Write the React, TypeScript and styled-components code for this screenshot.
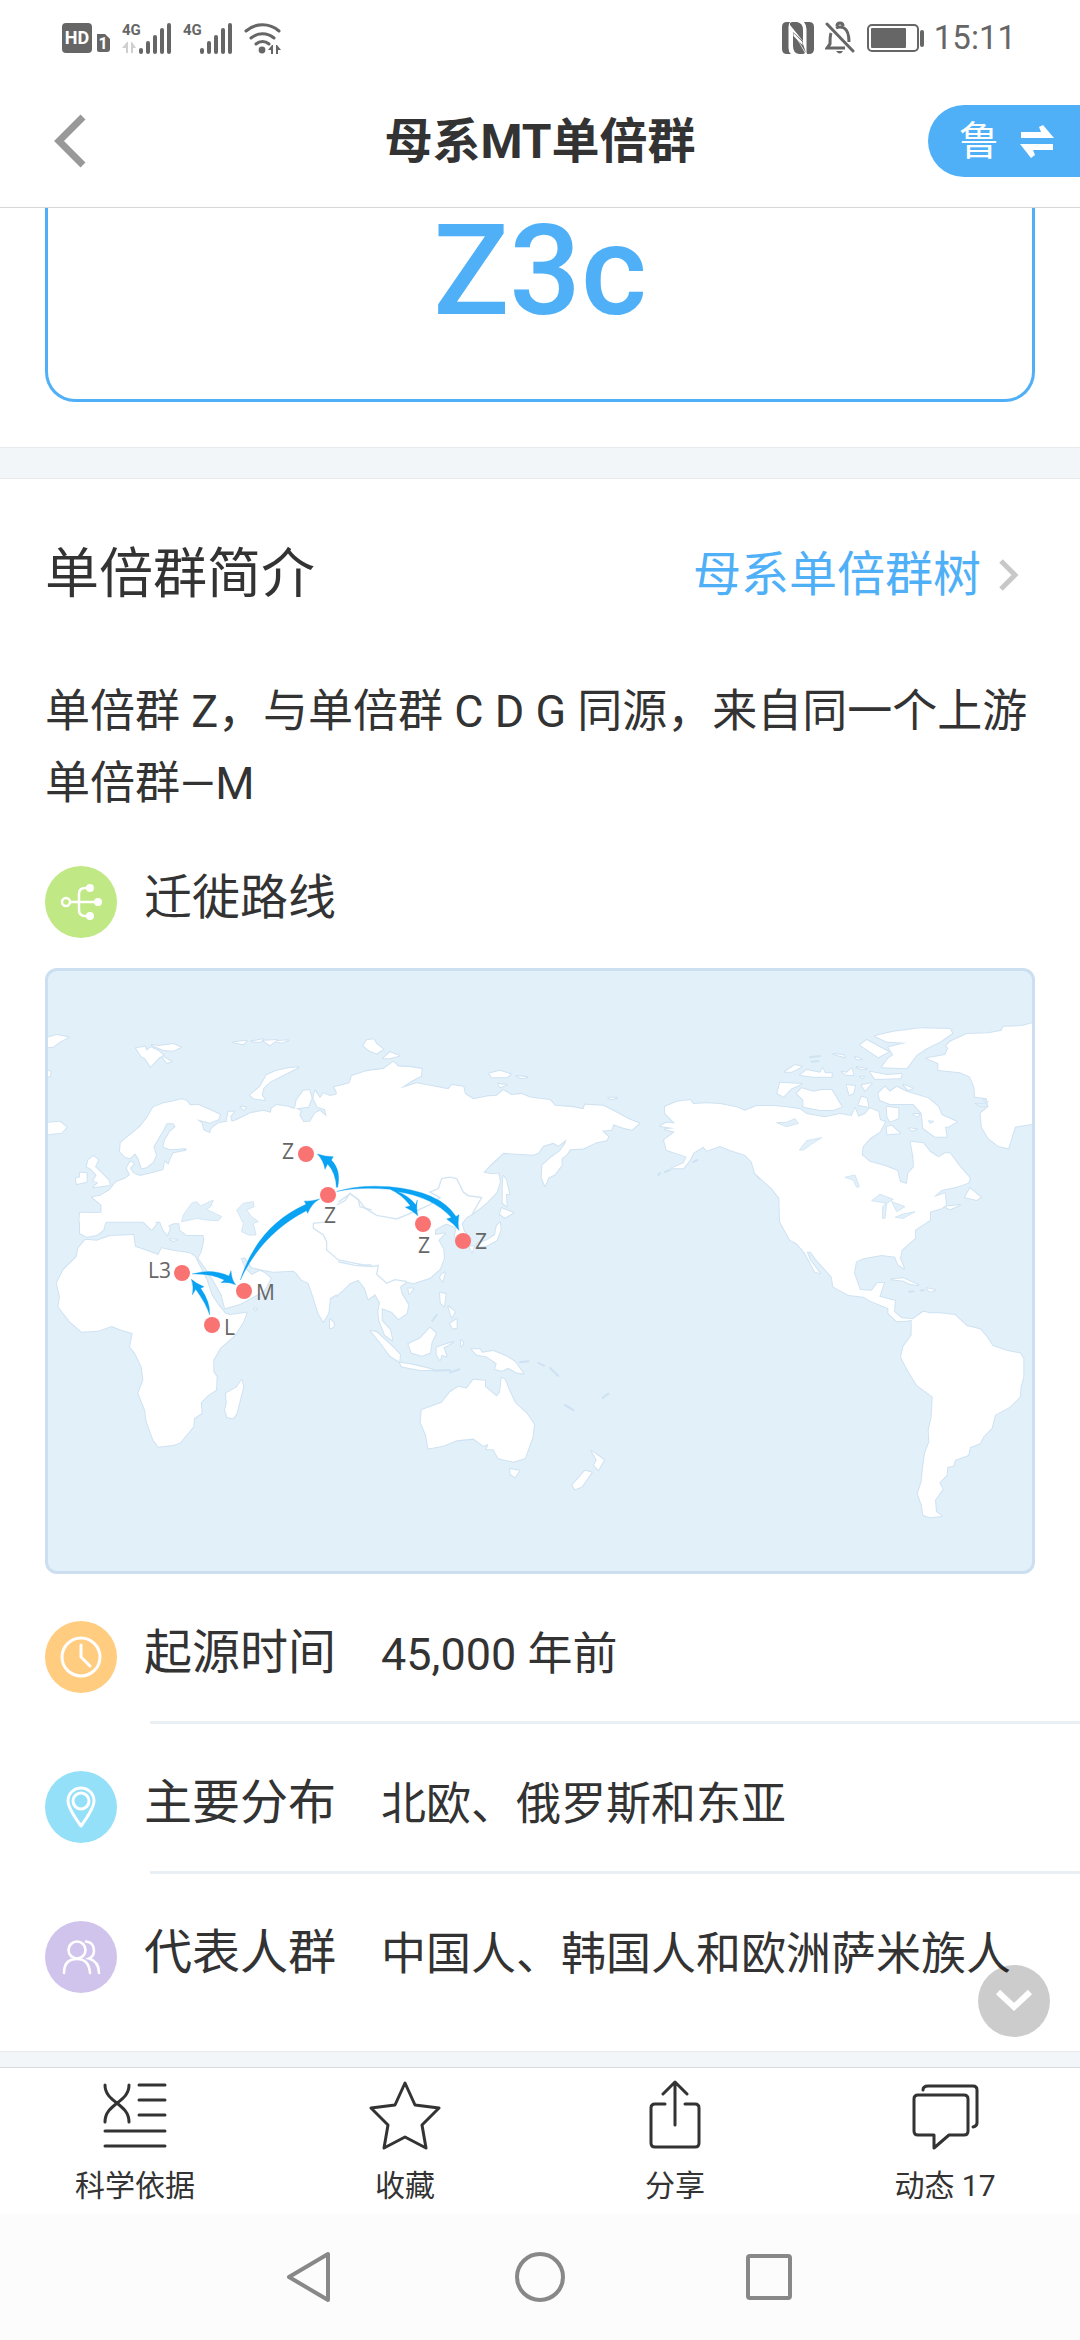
import React from 'react';
import styled, { createGlobalStyle } from 'styled-components';

const blue = '#4fb0f8';
const ink = '#333333';
const statusInk = '#666666';

const GlobalStyle = createGlobalStyle`
  * { box-sizing: border-box; }
  body {
    margin: 0;
    background: #fff;
    color: ${ink};
    font-family: Roboto, "Noto Sans CJK SC", sans-serif;
  }
  h1, h2, h3, p, dl, dt, dd { margin: 0; font-weight: 400; }
  button { padding: 0; border: 0; background: none; color: inherit; font: inherit; cursor: pointer; }
  a { color: inherit; text-decoration: none; }
  svg { display: block; flex: none; }
`;

const Page = styled.div`
  display: flex;
  flex-direction: column;
  min-height: 100vh;
`;

/* ---------- status bar ---------- */

const StatusBar = styled.div`
  display: flex;
  align-items: center;
  justify-content: space-between;
  height: 74px;
  padding: 2px 64px 0 61px;
  color: ${statusInk};
`;

const StatusGroup = styled.div<{ $gap: number }>`
  display: flex;
  align-items: center;
  gap: ${(p) => p.$gap}px;
`;

const Clock = styled.time`
  font-size: 33px;
  line-height: 40px;
`;

/* ---------- header ---------- */

const Header = styled.header`
  display: grid;
  grid-template-columns: 1fr auto 1fr;
  align-items: center;
  height: 134px;
  border-bottom: 1px solid #d8d8d8;
`;

const BackButton = styled.button`
  justify-self: start;
  padding: 20px 40px 20px 53px;
`;

const Title = styled.h1`
  padding-top: 2px;
  font-size: 48px;
  line-height: 64px;
  font-weight: 700;
`;

const SwitchButton = styled.button`
  display: flex;
  align-items: center;
  justify-self: end;
  gap: 20px;
  height: 72px;
  padding: 2px 25px 0 31px;
  border-radius: 36px 0 0 36px;
  background: ${blue};
  color: #fff;
  font-size: 40px;
  line-height: 48px;
`;

/* ---------- content ---------- */

const Main = styled.main`
  position: relative;
  flex: 1;
`;

const ResultCard = styled.section`
  margin: 0 45px 45px;
  padding: 3px 0 68px;
  border: 3px solid ${blue};
  border-top: 0;
  border-radius: 0 0 30px 30px;
  color: ${blue};
  font-size: 126px;
  line-height: 120px;
  font-weight: 500;
  text-align: center;
`;

const Band = styled.div<{ $height: number; $closed?: boolean }>`
  height: ${(p) => p.$height}px;
  border-top: 1px solid #e6eaec;
  border-bottom: ${(p) => (p.$closed ? '1px solid #e6eaec' : '0')};
  background: #f2f6f9;
`;

const Intro = styled.section`
  padding: 56px 45px 0;
`;

const IntroHead = styled.div`
  display: flex;
  align-items: center;
  justify-content: space-between;
  padding-right: 15px;
`;

const SectionTitle = styled.h2`
  font-size: 54px;
  line-height: 80px;
`;

const TreeLink = styled.a`
  display: flex;
  align-items: center;
  gap: 17px;
  color: ${blue};
  font-size: 48px;
  line-height: 64px;
`;

const Paragraph = styled.p`
  margin: 61px 0 46px;
  font-size: 45px;
  line-height: 72px;
`;

const Badge = styled.span<{ $color: string }>`
  display: grid;
  place-items: center;
  flex: none;
  width: 72px;
  height: 72px;
  border-radius: 50%;
  background: ${(p) => p.$color};
`;

const RouteHead = styled.div`
  display: flex;
  gap: 27px;
`;

const RouteTitle = styled.h3`
  font-size: 48px;
  line-height: 64px;
`;

const MapFrame = styled.figure`
  margin: 30px 0 0;
  border: 3px solid #cbdff0;
  border-radius: 12px;
  background: #e2f0fa;
  overflow: hidden;

  svg { width: 100%; height: auto; }
`;

const MapLabel = styled.text`
  font-family: "Open Sans", "Noto Sans", sans-serif;
  font-size: 21px;
  fill: #666;
`;

const Facts = styled.dl`
  padding-bottom: 30px;
`;

const Fact = styled.div`
  display: flex;
  gap: 27px;
  padding: 47px 45px 28px;
`;

const FactName = styled.dt`
  flex: none;
  margin-right: 18px;
  font-size: 48px;
  line-height: 64px;
`;

const FactValue = styled.dd`
  font-size: 45px;
  line-height: 68px;
`;

const Divider = styled.div`
  height: 3px;
  margin-left: 150px;
  background: #e9eff3;
`;

const ScrollButton = styled.button`
  position: absolute;
  right: 30px;
  bottom: 30px;
  display: grid;
  place-items: center;
  width: 72px;
  height: 72px;
  border-radius: 50%;
  background: rgba(0, 0, 0, 0.2);
`;

/* ---------- bottom bars ---------- */

const TabBar = styled.nav`
  display: grid;
  grid-template-columns: repeat(4, 1fr);
  height: 147px;
  border-top: 1px solid #d9dcde;
`;

const Tab = styled.button`
  display: flex;
  flex-direction: column;
  align-items: center;
  gap: 14px;
  padding-top: 12px;
  font-size: 30px;
  line-height: 40px;
`;

const SystemBar = styled.div`
  display: flex;
  justify-content: center;
  align-items: center;
  gap: 179px;
  height: 126px;
  background: #fcfcfc;
`;

/* ---------- status icons ---------- */

const HdIcon = () => (
  <svg width="50" height="32" viewBox="0 0 50 32" fill={statusInk}>
    <rect x="1" y="1" width="30" height="30" rx="4" />
    <text x="16" y="22" fontSize="18" fontWeight="700" textAnchor="middle" fill="#fff">HD</text>
    <path d="M36 12h8l5 5v10a3 3 0 0 1-3 3h-8a2 2 0 0 1-2-2z" />
    <text x="42" y="27" fontSize="16" fontWeight="700" textAnchor="middle" fill="#fff">1</text>
  </svg>
);

const SignalIcon = ({ data }: { data?: boolean }) => (
  <svg width="50" height="34" viewBox="0 0 50 34" fill={statusInk}>
    <text x="0" y="14" fontSize="15" fontWeight="700">4G</text>
    {data && <path d="M0 27l5-6h1v11H4v-5zM9 21h1l4 6H11v5H9z" fill="#cfcfcf" />}
    <rect x="17" y="27" width="4" height="6" rx="2" />
    <rect x="24" y="20" width="4" height="13" rx="2" />
    <rect x="31" y="14" width="4" height="19" rx="2" />
    <rect x="38" y="7" width="4" height="26" rx="2" />
    <rect x="45" y="2" width="4" height="31" rx="2" />
  </svg>
);

const WifiIcon = () => (
  <svg width="38" height="34" viewBox="0 0 38 34" fill="none" stroke={statusInk} strokeWidth="3" strokeLinecap="round">
    <path d="M2 10a25 25 0 0 1 33 0M7 17a18 18 0 0 1 23 0M12 23a10 10 0 0 1 13 0" />
    <circle cx="18" cy="29" r="3.400" fill={statusInk} stroke="none" />
    <path d="M24 29l4-5h1v9h-2v-4zM32 24h1l4 5h-3v4h-2z" fill={statusInk} stroke="none" />
  </svg>
);

const NfcIcon = () => (
  <svg width="32" height="32" viewBox="0 0 32 32" fill={statusInk}>
    <path d="M5 0h3Q6.500 2 6.500 5v21q0 4 2.500 6H5q-5 0-5-5V5q0-5 5-5z" />
    <path d="M8 1q1-1 3-1h4q6 1 6 8v11L8 3z" />
    <path d="M11 10l12 21q-1 1-3 1h-3q-6-1-6-8z" />
    <path d="M11 10l10 9v3l3 9z" />
    <path d="M22 0h5q5 0 5 5v22q0 5-5 5h-2q0-1-.5-2V7q0-4-2.500-7z" />
    <path d="M11.500 11l9 9v3l-9-9z" fill="#fff" />
  </svg>
);

const BellOffIcon = () => (
  <svg width="30" height="34" viewBox="0 0 30 34" fill="none" stroke={statusInk} strokeWidth="3">
    <path d="M2 3l26 27" strokeLinecap="round" />
    <path d="M6 12q-1 3-1 11l-3 4h18M11 7q4-2 8 0 5 3 5 14" />
    <path d="M12 5q0-3 3-3t3 3" />
    <path d="M11 30q4 5 7 0z" fill={statusInk} stroke="none" />
  </svg>
);

const BatteryIcon = () => (
  <svg width="60" height="30" viewBox="0 0 60 30">
    <rect x="2" y="2" width="50" height="26" rx="4" fill="none" stroke={statusInk} strokeWidth="2" />
    <rect x="5" y="5" width="35" height="20" rx="1" fill={statusInk} />
    <rect x="54" y="7" width="4" height="17" rx="2" fill={statusInk} />
  </svg>
);

/* ---------- header and content icons ---------- */

const BackIcon = () => (
  <svg width="34" height="54" viewBox="0 0 34 54" fill="none" stroke="#999" strokeWidth="7">
    <path d="M30 3L6 27l24 24" />
  </svg>
);

const SwapIcon = () => (
  <svg width="36" height="36" viewBox="0 0 36 36" fill="#fff">
    <path d="M2 8h20l-2-5 4-2 11 13H2z" />
    <path d="M34 26H14l2 5-4 3L1 20h33z" />
  </svg>
);

const ChevronIcon = () => (
  <svg width="22" height="32" viewBox="0 0 22 32" fill="none" stroke="#c8c8c8" strokeWidth="5">
    <path d="M3 2l14 14L3 30" />
  </svg>
);

const RouteIcon = () => (
  <svg width="44" height="40" viewBox="0 0 44 40" fill="none" stroke="#fff" strokeWidth="2.5">
    <circle cx="7" cy="20" r="4" />
    <path d="M11 20h28M32 6h-6q-6 0-6 6v16q0 6 6 6h6" />
    <g fill="#fff" stroke="none">
      <circle cx="31" cy="6" r="4" />
      <circle cx="39" cy="20" r="4" />
      <circle cx="31" cy="34" r="4" />
    </g>
  </svg>
);

const ClockIcon = () => (
  <svg width="42" height="42" viewBox="0 0 42 42" fill="none" stroke="#fff" strokeWidth="3" strokeLinecap="round">
    <circle cx="21" cy="21" r="19" />
    <path d="M21 9v12l9 9" />
  </svg>
);

const PinIcon = () => (
  <svg width="32" height="42" viewBox="0 0 32 42" fill="none" stroke="#fff" strokeWidth="3" strokeLinejoin="round">
    <path d="M16 40Q3 22 3 15a13 13 0 0 1 26 0Q29 22 16 40z" />
    <circle cx="16" cy="15" r="8" />
  </svg>
);

const PeopleIcon = () => (
  <svg width="40" height="36" viewBox="0 0 40 36" fill="none" stroke="#fff" strokeWidth="2.6" strokeLinecap="round">
    <circle cx="16" cy="11" r="8.500" />
    <path d="M3 34q0-14 13-14 12 0 13 14M25 2.500q8 1 8 9 0 6-5 8 10 3 10 14.500" />
  </svg>
);

const DownIcon = () => (
  <svg width="38" height="24" viewBox="0 0 38 24" fill="none" stroke="#fff" strokeWidth="6">
    <path d="M3 3l16 15L35 3" />
  </svg>
);

/* ---------- world map ---------- */

/* Coastlines are stored per sheet; each sheet has its own origin. */
const sheets = {
  europe: 'translate(-18 -131) scale(.33333)',
  africa: 'translate(-18 209) scale(.33333)',
  pacific: 'translate(292 -11) scale(.33333 .35714)',
  northAmerica: 'translate(592 -11) scale(.33333)',
  southAmerica: 'translate(592 289) scale(.33333)',
};

type Sheet = keyof typeof sheets;

const land: [Sheet, string][] = [
  ['europe', `M1030 690L1000 700 965 712 958 730 930 738 912 742 925 762 900 768 880 760 870 775 855 752 850 775 862 800 885 808 890 830 870 812 855 820 840 845 820 846 808 825 812 812 795 805 800 780 820 752 838 750 845 775 835 800 790 806 775 800 740 795 725 805 722 818 700 812 660 820 640 830 620 840 605 845 600 830 612 815 595 815 590 845 565 850 545 865 540 880 520 870 515 850 500 838 540 848 565 838 570 824 540 810 505 795 480 796 470 782 455 778 425 785 400 790 370 802 350 835 330 860 300 885 272 908 270 935 285 950 300 955 315 940 325 955 335 985 350 982 370 965 378 945 370 920 385 895 400 870 410 850 430 850 437 860 420 875 405 900 400 920 420 928 470 925 468 932 430 940 420 960 415 975 405 965 400 990 370 998 330 1008 310 1000 300 985 312 970 300 965 290 985 300 1005 280 1020 255 1030 240 1050 210 1068 187 1072 205 1085 215 1095 215 1120 150 1118 148 1145 1030 1145Z`],
  ['europe', 'M175 960L190 948 205 960 195 980 215 1000 235 1020 240 1035 190 1042 205 1028 190 1022 200 1005 180 985 170 980ZM150 998L170 1000 170 1025 140 1032 138 1015 150 1012ZM30 850L90 845 110 862 95 878 30 885ZM30 600L80 585 115 592 90 605 70 620 30 625ZM50 690L62 695 60 708 50 712Z'],
  ['europe', 'M318 625L345 620 350 632 362 622 385 632 400 645 385 655 362 680 345 655 335 650ZM365 615L385 618 430 612 452 622 430 632 400 630ZM395 648L425 665 410 668ZM805 682L760 705 720 725 700 745 695 765 705 780 670 775 660 765 690 740 710 705 740 692 775 685ZM610 607L650 602 640 613ZM665 604L700 598 690 606ZM700 602L740 600 720 616ZM735 604L775 601 755 608ZM632 800L648 802 642 810Z'],
  ['africa', 'M150 100L215 98 215 75 187 52 210 48 240 30 260 5 300 -10 1030 -10 1030 350 1010 320 990 298 960 305 940 330 900 355 895 400 880 425 865 400 848 345 835 308 815 300 800 280 790 272 730 275 700 270 665 262 645 232 632 235 645 265 665 285 690 272 705 280 722 295 715 310 700 335 670 350 630 372 585 385 575 345 550 300 520 255 505 235 515 215 523 180 520 165 470 165 450 150 448 130 430 130 415 137 420 145 412 165 400 150 390 125 370 105 345 80 330 82 340 100 370 122 380 130 365 150 345 130 320 110 300 92 270 98 250 105 225 130 220 150 200 165 170 170 150 160Z'],
  ['africa', 'M175 180L200 182 240 168 310 165 315 200 350 212 385 225 395 205 430 212 480 220 495 230 505 250 530 300 545 345 565 375 585 400 600 405 650 398 640 425 615 465 570 505 550 540 550 575 560 590 558 630 535 645 512 668 515 700 492 715 490 740 450 788 430 795 385 800 370 780 350 725 345 690 325 640 340 600 335 560 315 520 300 500 308 460 275 450 245 438 205 452 155 455 120 425 85 380 90 350 80 310 100 270 140 230 145 205 165 180Z'],
  ['africa', 'M635 600L640 620 620 700 610 715 592 712 585 690 590 670 588 640 620 622ZM900 418L912 430 910 442 900 445ZM420 178L442 179 430 183ZM672 386l8 0-4 5z'],
  ['pacific', 'M-10 355L30 345 35 325 75 312 130 305 160 285 175 298 215 300 245 305 243 325 215 338 180 360 230 345 270 352 325 362 335 350 370 355 375 375 400 390 440 382 470 380 490 365 515 378 545 375 570 385 630 392 645 408 700 412 730 418 735 405 790 408 825 425 865 445 898 458 875 475 850 470 820 460 815 475 785 478 805 495 800 505 770 510 730 528 690 530 680 545 665 555 665 575 645 600 625 610 615 632 605 610 607 575 630 555 660 535 675 515 680 502 655 520 640 512 610 520 595 540 580 545 490 540 450 575 430 595 455 600 475 598 480 620 470 650 440 680 420 695 395 712 380 720 365 738 372 760 392 780 385 800 352 800 345 770 350 750 320 738 310 742 285 755 285 770 315 765 295 785 310 810 312 835 300 865 270 890 220 905 200 900 180 915 185 935 205 965 200 990 175 1005 155 985 125 975 125 1010 150 1035 157 1065 135 1050 118 1010 115 985 120 960 105 935 85 950 75 920 55 895 30 905 -10 940Z'],
  ['pacific', 'M205 920L220 920 208 935ZM305 880L315 875 308 900 300 890ZM490 605L498 615 508 655 498 655 500 690 488 680 488 640ZM485 695L520 708 495 722 480 712ZM480 735L482 755 470 785 440 800 415 803 410 795 440 785 465 770 470 745ZM388 802L402 802 396 818ZM300 932L317 935 312 970 302 960ZM325 970L345 985 335 1000ZM330 1018L350 1005 350 1030 338 1032ZM275 1012L292 992'],
  ['pacific', 'M205 1075L240 1060 270 1030 288 1045 275 1070 270 1100 245 1108 215 1100ZM92 1038L110 1042 160 1085 180 1105 178 1125 150 1108 120 1070ZM180 1128L210 1132 250 1140 280 1148 240 1148 185 1138ZM290 1085L320 1075 340 1070 310 1085 320 1110 305 1105 300 1120 290 1105ZM362 1065L370 1072 364 1082ZM395 1090L420 1090 425 1100 460 1095 500 1110 525 1125 550 1158 530 1155 505 1142 485 1150 465 1145 470 1130 440 1110 410 1105ZM540 1126L565 1124ZM595 1128L612 1136ZM630 1142L655 1165ZM675 1246L700 1260ZM788 1226L805 1214ZM285 1150L330 1148ZM330 1155L358 1146Z'],
  ['pacific', 'M245 1260L305 1240 330 1210 355 1195 380 1200 400 1175 435 1178 435 1195 470 1222 480 1210 485 1170 495 1175 505 1200 525 1240 560 1270 582 1300 578 1335 555 1395 520 1405 475 1395 460 1370 440 1370 445 1355 430 1360 400 1340 350 1345 310 1360 265 1368 258 1330 242 1295ZM510 1425L538 1430 525 1448 512 1440ZM755 1375L775 1388 792 1400 775 1428 762 1415 770 1400ZM735 1430L755 1435 725 1475 705 1482 697 1470Z'],
  ['pacific', 'M448 318L480 310 512 320 500 328 455 328ZM530 325L562 328 545 331ZM475 347L500 350 480 356ZM805 386L830 386 815 390ZM70 240L80 225 100 222 110 235 130 250 110 262 90 255ZM130 275L150 258 178 268 150 275Z'],
  ['northAmerica', 'M75 440L110 425 150 420 160 432 200 430 240 432 290 442 315 452 350 438 400 438 440 442 480 448 500 462 555 472 600 462 635 468 645 445 655 470 675 462 690 445 715 455 720 480 735 485 720 515 690 535 668 560 665 585 690 605 735 618 772 632 780 665 800 672 805 640 822 620 820 590 812 545 850 550 870 575 895 592 915 580 930 580 960 620 990 655 985 668 950 680 905 690 880 712 915 700 918 735 905 745 870 755 870 780 825 810 825 835 785 870 780 895 792 925 775 915 765 890 725 885 670 895 648 905 642 940 660 990 695 992 712 970 732 968 718 1010 765 1022 762 1055 785 1075 825 1078 800 1082 770 1084 745 1060 745 1045 690 1022 670 1010 625 1005 580 980 575 950 525 895 512 875 500 875 510 900 540 940 525 935 495 880 470 850 450 840 420 785 418 715 395 685 345 640 335 605 315 585 270 570 240 558 200 572 190 560 160 578 150 600 130 625 95 625 130 610 140 590 80 570 72 540 105 515 75 508 105 505 60 498 80 488 105 490 75 460Z'],
  ['northAmerica', 'M990 685L1022 712 1010 720 975 712ZM915 740L960 735 930 748ZM400 685L420 690 432 712 415 702ZM345 640L358 655ZM55 645L60 640ZM75 636L90 630ZM160 606L172 600Z'],
  ['northAmerica', 'M420 368L485 372 455 385 430 410 412 400ZM470 400L485 385 520 395 545 390 575 390 605 440 580 450 540 450 490 440 490 420ZM435 335L465 315 485 320 455 335ZM480 345L500 330 540 338 548 325 555 340 575 340 575 350 520 350ZM605 335L620 338 635 325 640 345 620 345ZM620 375L645 378 640 400 628 405ZM665 375L695 370 675 392ZM655 435L665 410 680 415 685 440ZM690 335L740 345 785 342 782 355 705 357ZM580 282L610 285 615 292ZM645 290L665 298 650 298ZM650 322L680 326 665 328ZM660 350L672 350 668 355ZM515 305L535 303ZM510 292L540 288Z'],
  ['northAmerica', 'M705 228L760 215 840 205 930 207 937 220 900 245 860 265 830 285 800 325 725 322 745 295 760 285 745 262 800 248 740 245ZM660 255L680 240 745 275 715 292 690 275ZM715 400L735 380 750 395 770 380 800 395 865 415 895 440 905 465 950 485 925 500 915 500 920 530 885 530 850 505 845 460 820 432 750 432 720 420ZM740 440L775 445 775 475 750 485 742 470ZM740 500L755 497 780 520 742 523ZM820 462L838 462 832 470ZM808 505L830 508 815 512ZM790 375L818 385 805 390Z'],
  ['northAmerica', 'M1190 186L1145 198 1090 200 1085 212 1045 220 980 222 930 245 918 258 925 265 915 285 860 295 895 310 895 330 960 337 990 350 1003 380 1005 410 1040 415 1045 440 1022 460 1025 500 1045 535 1075 558 1105 565 1125 500 1190 490ZM755 958L790 955 835 975 810 972 790 962ZM860 985L885 990 870 995ZM808 995L820 994ZM842 992L852 990Z'],
  ['southAmerica', 'M815 180L850 155 870 160 900 160 945 165 980 198 1020 208 1040 230 1058 258 1100 272 1140 280 1150 295 1150 350 1142 380 1140 410 1110 440 1065 465 1055 505 1030 530 1020 550 990 562 985 585 945 600 940 618 922 620 920 645 898 668 908 688 885 720 888 755 905 768 870 772 850 765 845 735 833 700 845 665 848 630 855 580 868 545 866 510 875 470 878 410 830 375 800 325 783 292 790 260 815 225Z'],
];

const water: [Sheet, string][] = [
  ['africa', 'M455 125L460 105 485 70 500 65 512 78 550 60 542 80 530 88 575 110 565 122 530 120 500 115 470 122ZM620 90L640 70 670 65 672 80 650 90 665 110 685 125 670 130 678 165 655 165 635 155 640 130Z'],
  ['northAmerica', 'M410 488L440 487 465 476 475 490 440 500ZM478 570L500 542 545 533 515 552 490 570ZM615 652L645 645 658 680 650 682 640 660ZM695 722L720 703 760 718 740 730ZM740 728L735 775 728 775 728 740ZM755 725L795 740 770 755ZM765 772L790 762 825 755 790 775Z'],
  ['northAmerica', 'M1003 430L1030 430 1045 425 1025 415 1045 440 1020 440ZM865 482L882 484 870 490Z'],
];

const borders: [Sheet, string][] = [
  ['africa', 'M920 75L945 62 960 40 985 60 990 80 1025 90M895 125L850 130 850 145 880 165 890 185 890 210 925 240 1000 255 1025 255'],
  ['pacific', 'M-5 678L30 655 55 670 75 695 110 715 170 725 235 700 270 685 300 665 270 650 295 640 305 612 330 608 350 612 370 650 385 660 425 665 410 690 395 715M-5 845L45 855 95 858 115 855 110 880 140 905 165 895 200 900'],
];

const arrows: [Sheet, string][] = [
  ['europe', 'M919 1042Q918 1000 893 972L885 988Q880 960 862 942 885 950 910 950L904 960Q934 990 923 1042Z'],
  ['africa', 'M539 405Q528 370 497 328L487 345Q492 320 484 298 500 312 522 320L512 325Q541 365 539 405Z'],
  ['africa', 'M487 282Q545 264 597 288L603 272Q605 300 617 314 595 305 573 308L583 300Q545 280 487 282Z'],
  ['africa', 'M631 300Q682 138 828 73L823 63Q845 65 869 57 845 70 833 100L829 92Q694 162 631 300Z'],
  ['pacific', 'M-10 648Q60 628 150 635 300 648 348 718L357 713Q352 740 357 757 342 738 320 725L334 721Q280 664 172 648 206 660 227 685L232 672Q228 700 234 716 215 700 196 692L211 688Q185 656 150 642 60 634 -10 648Z'],
];

const places = [
  { name: 'Z', x: 258, y: 183, tx: 234, ty: 188 },
  { name: 'Z', x: 280, y: 224, tx: 276, ty: 252 },
  { name: 'L3', x: 134, y: 302, tx: 100, ty: 307 },
  { name: 'M', x: 196, y: 320, tx: 208, ty: 329 },
  { name: 'L', x: 164, y: 354, tx: 176, ty: 364 },
  { name: 'Z', x: 375, y: 253, tx: 370, ty: 282 },
  { name: 'Z', x: 415, y: 270, tx: 427, ty: 278 },
];

const Shapes = ({ items }: { items: [Sheet, string][] }) => (
  <>
    {items.map(([sheet, d], i) => (
      <path key={i} transform={sheets[sheet]} d={d} />
    ))}
  </>
);

const WorldMap = () => (
  <svg viewBox="0 0 984 600" role="img" aria-label="迁徙路线">
    <g fill="#fff" stroke="#cfe2f1" strokeWidth="6" strokeLinejoin="round"><Shapes items={land} /></g>
    <g fill="#fff"><Shapes items={land} /></g>
    <g fill="#e2f0fa" stroke="#d3e5f3" strokeWidth="3"><Shapes items={water} /></g>
    <g fill="none" stroke="#d3e5f3" strokeWidth="4"><Shapes items={borders} /></g>
    <g fill="#0aa2f2" stroke="#0aa2f2" strokeWidth="1"><Shapes items={arrows} /></g>
    {places.map((p, i) => (
      <g key={i}>
        <circle cx={p.x} cy={p.y} r="8" fill="#f97373" />
        <MapLabel x={p.tx} y={p.ty}>{p.name}</MapLabel>
      </g>
    ))}
  </svg>
);

/* ---------- tab icons ---------- */

const TabIcon = ({ children }: { children: React.ReactNode }) => (
  <svg width="72" height="72" viewBox="0 0 72 72" fill="none" stroke={ink} strokeWidth="3" strokeLinecap="round" strokeLinejoin="round">
    {children}
  </svg>
);

const tabs = [
  {
    label: '科学依据',
    icon: <path d="M6 5c0 18 24 18 24 37M30 5c0 18-24 18-24 37M40 5h26M40 20h26M40 35h26M6 51h60M6 66h60" />,
  },
  {
    label: '收藏',
    icon: <path d="M36 3l10 22 24 3-17 17 4 23-21-11-21 11 4-23L2 28l24-3z" />,
  },
  {
    label: '分享',
    icon: <path d="M36 45V2M24 14L36 2l12 12M26 24H16q-4 0-4 4v35q0 4 4 4h40q4 0 4-4V28q0-4-4-4H46" />,
  },
  {
    label: '动态 17',
    icon: <path d="M9 15h46q4 0 4 4v32q0 4-4 4H40L25 68V55H9q-4 0-4-4V19q0-4 4-4zM14 10q0-4 5-4h45q4 0 4 4v33q0 3-4 4" />,
  },
];

const facts = [
  { name: '起源时间', value: '45,000 年前', color: '#ffcc80', icon: <ClockIcon /> },
  { name: '主要分布', value: '北欧、俄罗斯和东亚', color: '#95e0f9', icon: <PinIcon /> },
  { name: '代表人群', value: '中国人、韩国人和欧洲萨米族人', color: '#d1c4ec', icon: <PeopleIcon /> },
];

export default function App() {
  return (
    <Page lang="zh-CN">
      <GlobalStyle />
      <StatusBar>
        <StatusGroup $gap={11}>
          <HdIcon />
          <SignalIcon data />
          <SignalIcon />
          <WifiIcon />
        </StatusGroup>
        <StatusGroup $gap={11}>
          <NfcIcon />
          <BellOffIcon />
          <StatusGroup $gap={8}>
            <BatteryIcon />
            <Clock>15:11</Clock>
          </StatusGroup>
        </StatusGroup>
      </StatusBar>

      <Header>
        <BackButton aria-label="返回"><BackIcon /></BackButton>
        <Title>母系MT单倍群</Title>
        <SwitchButton>鲁<SwapIcon /></SwitchButton>
      </Header>

      <Main>
        <ResultCard>Z3c</ResultCard>
        <Band $height={32} $closed />
        <Intro>
          <IntroHead>
            <SectionTitle>单倍群简介</SectionTitle>
            <TreeLink href="#tree">母系单倍群树<ChevronIcon /></TreeLink>
          </IntroHead>
          <Paragraph>单倍群 Z，与单倍群 C D G 同源，来自同一个上游单倍群—M</Paragraph>
          <RouteHead>
            <Badge $color="#c0e884"><RouteIcon /></Badge>
            <RouteTitle>迁徙路线</RouteTitle>
          </RouteHead>
          <MapFrame><WorldMap /></MapFrame>
        </Intro>
        <Facts>
          {facts.map((f, i) => (
            <React.Fragment key={f.name}>
              {i > 0 && <Divider />}
              <Fact>
                <Badge $color={f.color}>{f.icon}</Badge>
                <FactName>{f.name}</FactName>
                <FactValue>{f.value}</FactValue>
              </Fact>
            </React.Fragment>
          ))}
        </Facts>
        <Band $height={16} />
        <ScrollButton aria-label="向下"><DownIcon /></ScrollButton>
      </Main>

      <TabBar>
        {tabs.map((t) => (
          <Tab key={t.label}>
            <TabIcon>{t.icon}</TabIcon>
            {t.label}
          </Tab>
        ))}
      </TabBar>

      <SystemBar>
        <button aria-label="后退">
          <svg width="50" height="54" viewBox="0 0 50 54" fill="none" stroke="#888" strokeWidth="4" strokeLinejoin="round">
            <path d="M42 4v46L3 27z" />
          </svg>
        </button>
        <button aria-label="主页">
          <svg width="50" height="50" viewBox="0 0 50 50" fill="none" stroke="#888" strokeWidth="4">
            <circle cx="25" cy="25" r="23" />
          </svg>
        </button>
        <button aria-label="最近任务">
          <svg width="50" height="50" viewBox="0 0 50 50" fill="none" stroke="#888" strokeWidth="4">
            <rect x="4" y="4" width="42" height="42" rx="2" />
          </svg>
        </button>
      </SystemBar>
    </Page>
  );
}
